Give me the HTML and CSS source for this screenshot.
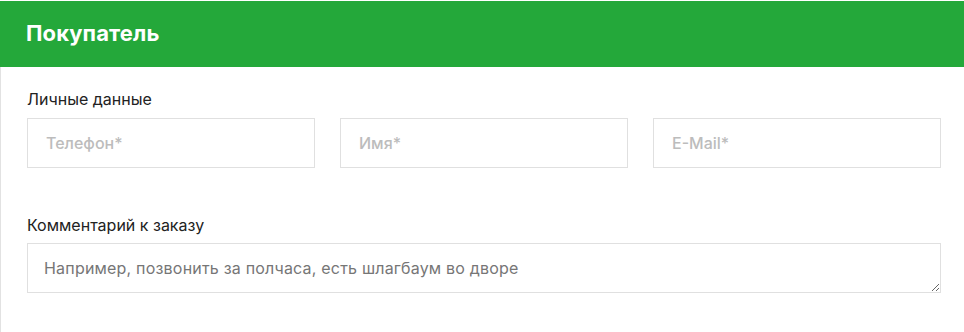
FILE: index.html
```html
<!DOCTYPE html>
<html lang="ru">
<head>
    <meta charset="UTF-8">
    <meta name="viewport" content="width=device-width, initial-scale=1.0">
    <title>Покупатель</title>
    <link rel="stylesheet" href="styles.css">
</head>
<body>
    <div class="card">
        <div class="card-header">Покупатель</div>

        <div class="card-body">
            <div class="group-label">Личные данные</div>
            <div class="fields">
                <input type="text" class="field" placeholder="Телефон*">
                <input type="text" class="field" placeholder="Имя*">
                <input type="text" class="field" placeholder="E-Mail*">
            </div>

            <div class="group-label comment-label">Комментарий к заказу</div>
            <textarea class="comment" placeholder="Например, позвонить за полчаса, есть шлагбаум во дворе"></textarea>
        </div>
    </div>
</body>
</html>
```

FILE: styles.css
```css
body {
    margin: 0;
    font-family: Inter, "Noto Sans", sans-serif;
    background-color: #fff;
}

/* Card */
.card {
    margin-top: 1px;
    border-left: 1px solid #e2e2e2;
    min-height: 331px;
    box-sizing: border-box;
}

.card-header {
    background-color: #24a83a;
    color: #fff;
    font-size: 22px;
    font-weight: bold;
    letter-spacing: 0.1px;
    height: 66px;
    line-height: 64px;
    padding-left: 26px;
    margin-left: -1px;
}

.card-body {
    padding: 22px 23px 0 26px;
}

.group-label {
    font-size: 16px;
    color: #222;
    line-height: 20px;
    margin-bottom: 9px;
}

.comment-label {
    margin-top: 47px;
    margin-bottom: 8px;
}

/* Inputs */
.fields {
    display: grid;
    grid-template-columns: repeat(3, 288px);
    gap: 25px;
}

.field {
    height: 50px;
    box-sizing: border-box;
    border: 1px solid #e0e0e0;
    padding: 0 18px;
    font-family: inherit;
    font-size: 16px;
    font-weight: 500;
    color: #333;
    outline: none;
}

.field::placeholder {
    color: #bcbcbc;
}

.comment {
    display: block;
    width: 914px;
    height: 50px;
    box-sizing: border-box;
    border: 1px solid #e0e0e0;
    padding: 13px 16px;
    font-family: inherit;
    font-size: 16px;
    letter-spacing: 0.2px;
    line-height: 22px;
    color: #333;
    outline: none;
    resize: vertical;
}

.comment::placeholder {
    color: #767676;
}
```
